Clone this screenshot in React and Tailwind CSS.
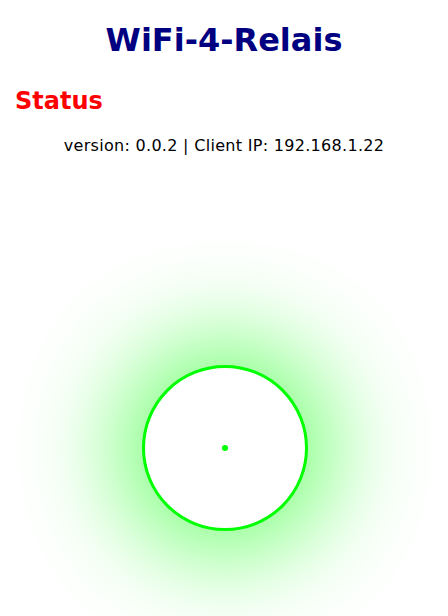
import React from 'react';

// ─── Indicateur d'état (cercle lumineux) ─────────────────────────────────────
function StatusLamp() {
    return (
        <div className="flex justify-center mt-[210px]">
            <div className="ml-[2px] w-[166px] h-[166px] rounded-full border-[3px] border-[#00ff00] bg-white shadow-[0_0_100px_25px_rgba(0,255,0,0.55)] flex items-center justify-center">
                <div className="w-[6px] h-[6px] rounded-full bg-[#00ff00]" />
            </div>
        </div>
    );
}

export default function App() {
    return (
        <div className="min-h-[616px] bg-white font-['DejaVu_Sans',Verdana,sans-serif] overflow-hidden">
            <h1 className="pt-[21px] text-center text-[32px] leading-[38px] font-bold text-[#000080]">
                WiFi-4-Relais
            </h1>
            <h2 className="mt-[28px] ml-[15px] text-[24px] leading-[28px] font-bold text-[#ff0000]">
                Status
            </h2>
            <p className="mt-[21px] text-center text-[16px] leading-[19px] tracking-[0.3px] text-black">
                version: 0.0.2 | Client IP: 192.168.1.22
            </p>
            <StatusLamp />
        </div>
    );
}
